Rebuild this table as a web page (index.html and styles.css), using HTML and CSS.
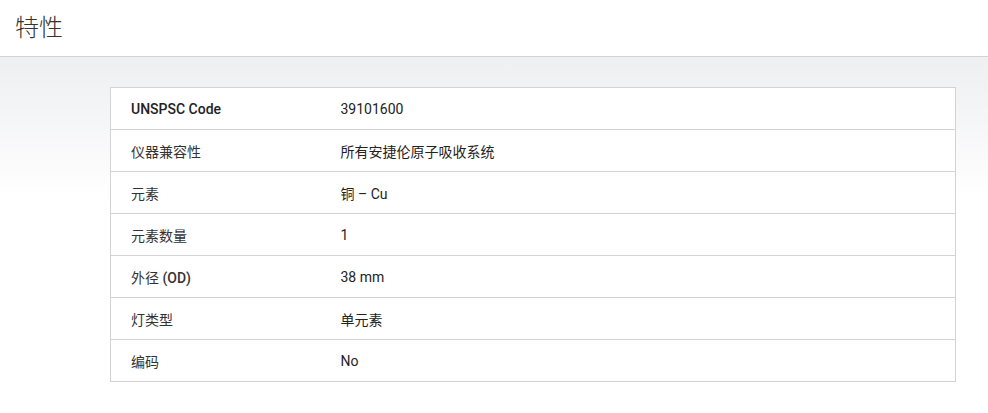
FILE: index.html
```html
<!DOCTYPE html>
<html lang="zh">
<head>
<meta charset="utf-8">
<link rel="stylesheet" href="styles.css">
</head>
<body>
<header class="head"><h1 class="title">特性</h1></header>
<section class="content">
  <table class="specs">
    <colgroup><col class="c1"><col class="c2"></colgroup>
    <tr><th>UNSPSC Code</th><td>39101600</td></tr>
    <tr><td class="lbl">仪器兼容性</td><td>所有安捷伦原子吸收系统</td></tr>
    <tr><td class="lbl">元素</td><td>铜 – Cu</td></tr>
    <tr><td class="lbl">元素数量</td><td>1</td></tr>
    <tr><td class="lbl">外径 <b>(OD)</b></td><td>38 mm</td></tr>
    <tr><td class="lbl">灯类型</td><td>单元素</td></tr>
    <tr><td class="lbl">编码</td><td>No</td></tr>
  </table>
</section>
</body>
</html>
```
FILE: styles.css
```css
html, body { margin: 0; padding: 0; background: #fff; }
body { font-family: Roboto, "Noto Sans CJK SC", sans-serif; color: #333; }
.head { height: 56px; border-bottom: 1px solid #d3d3d3; display: flex; align-items: center; padding-left: 15px; }
.title { margin: 0; font-size: 24px; font-weight: 300; color: #333; line-height: 1; }
.content { background: linear-gradient(to bottom, #eeeff1 0px, #fbfbfc 110px, #fff 140px); padding: 30px 32px 40px 110px; }
.specs { width: 846px; table-layout: fixed; border-collapse: collapse; background: #fff; border: 1px solid #d3d3d3; font-size: 14px; }
.specs .c1 { width: 210px; }
.specs tr { height: 42px; }
.specs th, .specs td { border-bottom: 1px solid #d3d3d3; padding: 0 0 0 20px; text-align: left; vertical-align: middle; }
.specs th { font-weight: 500; color: #222; }
.specs td { color: #222; }
.specs td.lbl { color: #333; }
.specs b { font-weight: 500; }
```
